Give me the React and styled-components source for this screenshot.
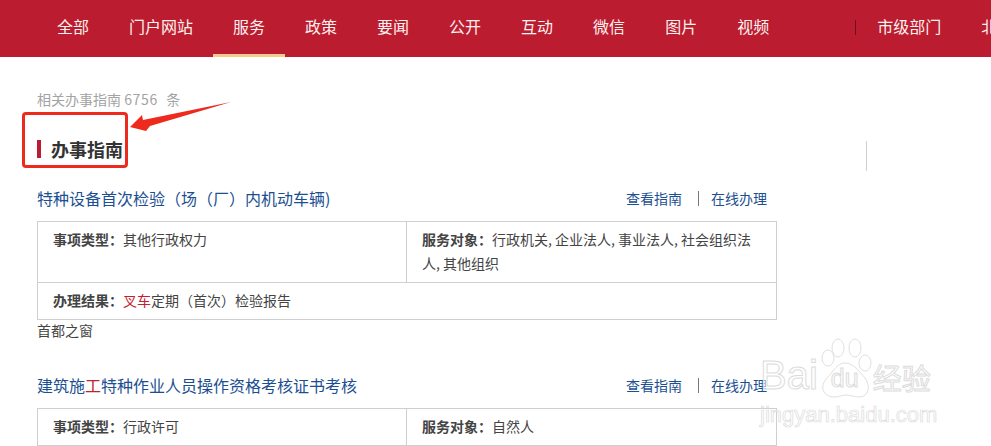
import React from 'react'
import styled, { createGlobalStyle } from 'styled-components'

const Global = createGlobalStyle`
  html, body { margin: 0; padding: 0; background: #fff; }
  body {
    width: 991px;
    height: 446px;
    overflow: hidden;
    font-family: "Noto Sans CJK SC", "Liberation Sans", sans-serif;
  }
`

const Nav = styled.nav`
  height: 57px;
  background: #bb1c30;
  display: flex;
  padding-left: 37px;
  overflow: hidden;
  white-space: nowrap;
`

const NavItem = styled.a`
  box-sizing: border-box;
  height: 57px;
  padding: 0 20px;
  line-height: 53px;
  font-size: 16px;
  color: #fdf1ee;
  flex: none;
  border-bottom: 3px solid ${p => (p.$active ? '#f6c98c' : 'transparent')};
`

const NavLink = styled(NavItem)`
  padding: 0 40px 0 0;
`

const NavDivider = styled.i`
  flex: none;
  width: 1px;
  height: 15px;
  margin: 20px 21px 0 66px;
  background: #701018;
`

const Content = styled.main`
  position: relative;
  padding: 33px 0 0 37px;
  width: 740px;
`

const Count = styled.div`
  font-size: 14px;
  line-height: 18px;
  color: #a3a3a3;
`

const CountNum = styled.span`
  letter-spacing: 0.7px;
  margin-right: 2px;
`

const Heading = styled.h2`
  margin: 31px 0 0;
  display: flex;
  align-items: center;
  height: 20px;
  font-size: 18px;
  font-weight: 700;
  color: #333;
  &::before {
    content: '';
    width: 4px;
    height: 18px;
    margin-right: 10px;
    background: #bb1c30;
  }
`

const Callout = styled.div`
  position: absolute;
  left: 22px;
  top: 55px;
  width: 106px;
  height: 56px;
  box-sizing: border-box;
  border: 3px solid #ee2a1f;
  border-radius: 4px;
`

const Arrow = styled.svg`
  position: absolute;
  left: 128px;
  top: 43px;
`

const Side = styled.i`
  position: absolute;
  left: 866px;
  top: 141px;
  width: 1px;
  height: 30px;
  background: #cfcfcf;
`

const ItemHead = styled.div`
  display: flex;
  align-items: center;
  justify-content: space-between;
  height: 24px;
  width: 730px;
`

const ItemTitle = styled.a`
  font-size: 16px;
  color: #1c4f91;
`

const Em = styled.span`
  color: #c3202f;
`

const Actions = styled.div`
  display: flex;
  align-items: center;
  font-size: 14px;
  color: #1c4f91;
`

const ActionDivider = styled.i`
  width: 1px;
  height: 15px;
  margin: 0 12px 0 16px;
  background: #7a7a70;
`

const Table = styled.div`
  box-sizing: border-box;
  width: 740px;
  margin-top: 11px;
  border: 1px solid #cfcfcf;
  font-size: 14px;
  line-height: 24px;
  color: #444;
`

const Row = styled.div`
  display: grid;
  grid-template-columns: ${p => (p.$split ? '368px 1fr' : '1fr')};
  & + & {
    border-top: 1px solid #cfcfcf;
  }
`

const Cell = styled.div`
  box-sizing: border-box;
  padding: 5px 15px 7px;
  & + & {
    border-left: 1px solid #cfcfcf;
  }
`

const Label = styled.b`
  font-weight: 700;
  color: #444;
`

const Source = styled.div`
  font-size: 14px;
  line-height: 20px;
  color: #444;
`

const Item = styled.section`
  margin-top: ${p => p.$top}px;
`

const Watermark = styled.div`
  position: absolute;
  left: 760px;
  top: 338px;
  width: 178px;
  pointer-events: none;
  font-family: "Liberation Sans", sans-serif;
  -webkit-text-stroke: 1px #dcdcdc;
  -webkit-text-fill-color: rgba(255, 255, 255, 0.55);
`

const WmMain = styled.div`
  display: flex;
  align-items: flex-end;
  height: 60px;
  font-size: 40px;
  line-height: 46px;
`

const PawWrap = styled.div`
  position: relative;
  width: 54px;
  height: 60px;
  flex: none;
  margin-left: 1px;
`

const PawText = styled.span`
  position: absolute;
  left: 12px;
  bottom: 6px;
  font-size: 25px;
  line-height: 28px;
`

const WmCn = styled.span`
  font-family: "Noto Sans CJK SC", sans-serif;
  font-size: 29px;
  line-height: 42px;
`

const WmUrl = styled.div`
  font-size: 22px;
  line-height: 26px;
  margin-top: 4px;
  white-space: nowrap;
  -webkit-text-stroke-width: 0.7px;
`

const navs = ['全部', '门户网站', '服务', '政策', '要闻', '公开', '互动', '微信', '图片', '视频']

export default function App() {
  return (
    <>
      <Global />
      <Nav>
        {navs.map(n => (
          <NavItem key={n} $active={n === '服务'}>{n}</NavItem>
        ))}
        <NavDivider />
        <NavLink>市级部门</NavLink>
        <NavLink>北京</NavLink>
      </Nav>
      <Content>
        <Count>相关办事指南 <CountNum>6756</CountNum>&nbsp;&nbsp;条</Count>
        <Heading>办事指南</Heading>
        <Callout />
        <Arrow width="104" height="36" viewBox="0 0 104 36">
          <path d="M103 2 L15 20 L14 15 L2 27 L18 31 L22 26 Z" fill="#ee2a1f" />
        </Arrow>
        <Item $top={27}>
          <ItemHead>
            <ItemTitle>特种设备首次检验（场（厂）内机动车辆)</ItemTitle>
            <Actions>查看指南<ActionDivider />在线办理</Actions>
          </ItemHead>
          <Table>
            <Row $split>
              <Cell><Label>事项类型：</Label>其他行政权力</Cell>
              <Cell><Label>服务对象：</Label>行政机关, 企业法人, 事业法人, 社会组织法人, 其他组织</Cell>
            </Row>
            <Row>
              <Cell><Label>办理结果：</Label><Em>叉车</Em>定期（首次）检验报告</Cell>
            </Row>
          </Table>
          <Source>首都之窗</Source>
        </Item>
        <Item $top={33}>
          <ItemHead>
            <ItemTitle>建筑施<Em>工</Em>特种作业人员操作资格考核证书考核</ItemTitle>
            <Actions>查看指南<ActionDivider />在线办理</Actions>
          </ItemHead>
          <Table>
            <Row $split>
              <Cell><Label>事项类型：</Label>行政许可</Cell>
              <Cell><Label>服务对象：</Label>自然人</Cell>
            </Row>
          </Table>
        </Item>
      </Content>
      <Side />
      <Watermark>
        <WmMain>
          Bai
          <PawWrap>
            <svg width="54" height="60" viewBox="0 0 54 60" fill="none" stroke="#e0e0e0" strokeWidth="1">
              <ellipse cx="9" cy="20" rx="6" ry="8" />
              <ellipse cx="19" cy="10" rx="6" ry="9" />
              <ellipse cx="36" cy="10" rx="6" ry="9" />
              <ellipse cx="46" cy="25" rx="6" ry="8" />
              <path d="M26 25 C18 25 14 34 8 40 C0 48 4 59 15 59 C20 59 23 57 27 57 C32 57 35 59 40 59 C50 59 52 48 46 40 C40 33 34 25 26 25 Z" />
            </svg>
            <PawText>du</PawText>
          </PawWrap>
          <WmCn>经验</WmCn>
        </WmMain>
        <WmUrl>jingyan.baidu.com</WmUrl>
      </Watermark>
    </>
  )
}
